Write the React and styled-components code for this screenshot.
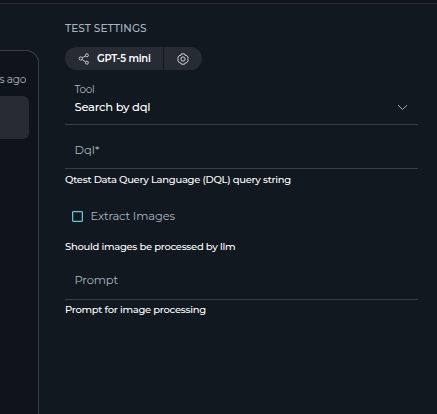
import React from "react";
import styled, { createGlobalStyle } from "styled-components";

const GlobalStyle = createGlobalStyle`
  * { box-sizing: border-box; }
  html, body { margin: 0; height: 100%; overflow: hidden; background: #111820; }
  body { font-family: "Montserrat", Inter, "Open Sans", sans-serif; color: #fff; }
`;

const Page = styled.div`
  display: flex;
  flex-direction: column;
  width: 437px;
  height: 414px;
  background: #111820;
  overflow: hidden;
`;

const TopBar = styled.header`
  flex: none;
  height: 4px;
  background: #10131c;
  border-bottom: 1px solid #2b2e36;
`;

const Content = styled.div`
  display: flex;
  flex: 1;
  min-height: 0;
`;

const HistoryPanel = styled.aside`
  flex: none;
  width: 39px;
  margin-top: 46px;
  padding: 22px 9px 0 0;
  background: #0f131c;
  border: solid #3b3e46;
  border-width: 1px 1px 0 0;
  border-top-right-radius: 13px;
`;

const TimeLabel = styled.div`
  display: flex;
  justify-content: flex-end;
  height: 14px;
  margin-right: 3px;
  font-size: 10.5px;
  line-height: 14px;
  letter-spacing: -0.25px;
  color: #a9b7c1;
  white-space: nowrap;
`;

const MessageCard = styled.div`
  height: 43px;
  margin-top: 9px;
  background: #262b34;
  border-radius: 0 6px 6px 0;
`;

const Settings = styled.main`
  flex: 1;
  min-width: 0;
  padding: 16px 19px 0 26px;
`;

const Title = styled.h2`
  margin: 0;
  height: 16px;
  padding-top: 1px;
  font-size: 10.5px;
  font-weight: 500;
  line-height: 16px;
  letter-spacing: 0.05px;
  color: #a9b7c1;
  white-space: nowrap;
`;

const ButtonGroup = styled.div`
  display: flex;
  gap: 1px;
  height: 23px;
  margin-top: 11px;
`;

const GroupButton = styled.button`
  display: flex;
  align-items: center;
  width: ${(p) => p.$width}px;
  height: 23px;
  padding: 0 0 0 ${(p) => p.$inset}px;
  gap: 7px;
  border: 0;
  background: #262b34;
  color: #fff;
  font: 600 10px/23px "Montserrat", Inter, sans-serif;
  letter-spacing: -0.22px;
  white-space: nowrap;
  &:first-child { border-radius: 12px 0 0 12px; }
  &:last-child { border-radius: 0 12px 12px 0; }
  svg { flex: none; }
`;

const Field = styled.div`
  display: flex;
  align-items: center;
  justify-content: space-between;
  height: ${(p) => p.$height}px;
  padding: ${(p) => p.$top}px 10px 0 9.5px;
  border-bottom: 1px solid #3b3e46;
`;

const SelectField = styled(Field)`
  align-items: flex-end;
  padding-bottom: 8px;
  svg { margin-bottom: 5px; }
`;

const FieldText = styled.div`
  display: flex;
  flex-direction: column;
`;

const FieldCaption = styled.span`
  font-size: 10.5px;
  line-height: 16px;
  letter-spacing: -0.4px;
  color: #a9b7c1;
`;

const FieldValue = styled.span`
  font-size: 11.5px;
  font-weight: 500;
  line-height: 18px;
  letter-spacing: -0.25px;
  color: #fff;
  white-space: nowrap;
`;

const Placeholder = styled.span`
  font-size: 11.5px;
  line-height: 18px;
  letter-spacing: ${(p) => p.$spacing ?? -0.14}px;
  color: #a9b7c1;
  white-space: nowrap;
`;

const Helper = styled.p`
  margin: ${(p) => p.$top}px 0 0;
  height: 14px;
  font-size: 10px;
  font-weight: 500;
  line-height: 14px;
  letter-spacing: -0.29px;
  color: #fff;
  white-space: nowrap;
`;

const CheckRow = styled.label`
  display: flex;
  align-items: center;
  gap: 7.5px;
  height: 18px;
  margin-top: 20px;
  padding-left: 7px;
`;

const CheckBox = styled.span`
  width: 11px;
  height: 11px;
  border: 1px solid #63c6d2;
  border-radius: 1px;
  box-shadow: inset 0 0 0 0.5px #347680;
`;

const ShareIcon = () => (
  <svg width="12" height="12" viewBox="0 0 12 12" fill="none" stroke="#d2d6db" strokeWidth="0.9">
    <circle cx="2.7" cy="5.5" r="1.6" />
    <circle cx="8.9" cy="2.3" r="1.5" />
    <circle cx="8.9" cy="9.7" r="1.5" />
    <path d="M4.1 4.8 7.5 3M4 6.5 7.6 8.8" />
  </svg>
);

const GearIcon = () => (
  <svg width="12" height="12" viewBox="0 0 12 12" fill="none" stroke="#e4e7ea" strokeWidth="0.9" strokeLinejoin="round">
    <path d="M4.4.9h3.2l.6 1.5 1.6.2 1.6 2.6L10.5 6l.9 1.2-1.6 2.4-1.6.3-.6 1.3H4.4l-.6-1.3-1.6-.3L.6 7.2 1.5 6 .6 5.2l1.6-2.6 1.6-.2z" />
    <circle cx="6" cy="6" r="2.1" />
  </svg>
);

const ChevronIcon = () => (
  <svg width="11" height="7" viewBox="0 0 11 7" fill="none" stroke="#a9afb7" strokeWidth="1">
    <path d="m1 1.2 4.5 4.3L10 1.2" />
  </svg>
);

export default function App() {
  return (
    <Page>
      <GlobalStyle />
      <TopBar />
      <Content>
        <HistoryPanel>
          <TimeLabel>s ago</TimeLabel>
          <MessageCard />
        </HistoryPanel>
        <Settings>
          <Title>TEST SETTINGS</Title>
          <ButtonGroup>
            <GroupButton $width={98} $inset={13}>
              <ShareIcon />
              GPT-5 mini
            </GroupButton>
            <GroupButton $width={38} $inset={13} aria-label="Model settings">
              <GearIcon />
            </GroupButton>
          </ButtonGroup>
          <SelectField $height={55} $top={0}>
            <FieldText>
              <FieldCaption>Tool</FieldCaption>
              <FieldValue>Search by dql</FieldValue>
            </FieldText>
            <ChevronIcon />
          </SelectField>
          <Field $height={44} $top={7}>
            <Placeholder $spacing={0}>Dql*</Placeholder>
          </Field>
          <Helper $top={4}>Qtest Data Query Language (DQL) query string</Helper>
          <CheckRow>
            <CheckBox />
            <Placeholder>Extract Images</Placeholder>
          </CheckRow>
          <Helper $top={15}>Should images be processed by llm</Helper>
          <Field $height={46} $top={6}>
            <Placeholder>Prompt</Placeholder>
          </Field>
          <Helper $top={3}>Prompt for image processing</Helper>
        </Settings>
      </Content>
    </Page>
  );
}
